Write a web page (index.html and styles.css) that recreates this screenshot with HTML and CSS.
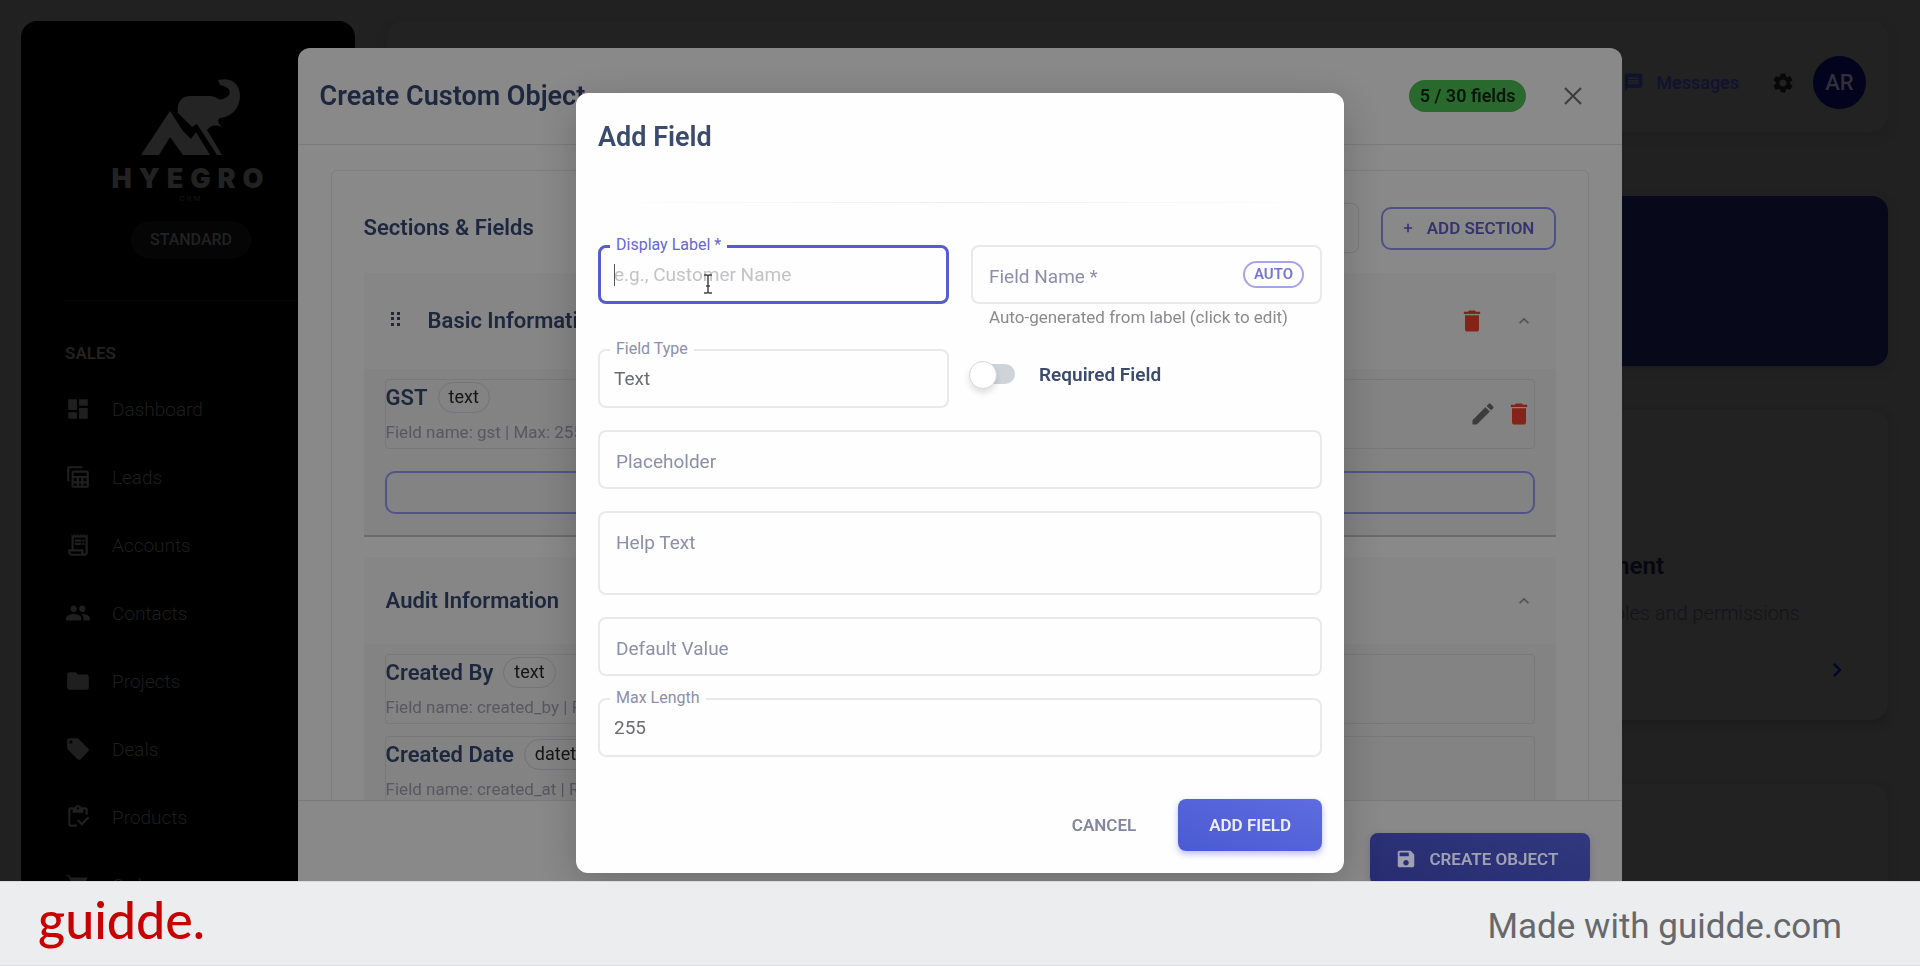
FILE: index.html
```html
<!DOCTYPE html>
<html lang="en">
<head>
<meta charset="utf-8">
<title>Create Custom Object</title>
<link rel="stylesheet" href="styles.css">
</head>
<body>
<svg class="sprite" aria-hidden="true">
  <symbol id="trash" viewBox="0 0 24 24"><path d="M6 19c0 1.100.9 2 2 2h8c1.100 0 2-.9 2-2V7H6v12zM19 4h-3.500l-1-1h-5l-1 1H5v2h14V4z"/></symbol>
  <symbol id="up" viewBox="0 0 24 24"><path d="M12 8l-6 6 1.410 1.410L12 10.830l4.590 4.580L18 14z"/></symbol>
</svg>

<div class="app">
  <aside class="sidebar">
    <div class="brand">
      <svg class="brand-mark" viewBox="0 0 102 78" aria-hidden="true">
        <path d="M1 77L30 33L43 53L51 61L56 54L70 77H43L30 59L19 77Z"/>
        <path d="M38 35C36 23 43 18 50 18H70C76 18 79 23 83 21C94 17 91 9 80 7L78 2C93-1 100 7 100 19C99 31 91 39 80 40C76 43 79 46 82 49C75 46 70 48 67 52L82 77H77L57 46L52 49Z"/>
      </svg>
      <div class="brand-name">HYEGRO</div>
      <div class="brand-sub">CRM</div>
      <div class="plan">STANDARD</div>
    </div>
    <hr class="side-line">
    <h2 class="side-title">SALES</h2>
    <nav class="nav">
      <a href="#"><svg viewBox="0 0 24 24"><path d="M3 13h8V3H3v10zm0 8h8v-6H3v6zm10 0h8V11h-8v10zm0-18v6h8V3h-8z"/></svg>Dashboard</a>
      <a href="#"><svg viewBox="0 0 24 24"><path fill-rule="evenodd" d="M4 16V4h12V2H4a2 2 0 0 0-2 2v12zM20 6H8a2 2 0 0 0-2 2v12a2 2 0 0 0 2 2h12a2 2 0 0 0 2-2V8a2 2 0 0 0-2-2zM8 8h12v3H8zm0 5h3v3H8zm5 0h2v3h-2zm4 0h3v3h-3zm-9 5h3v2H8zm5 0h2v2h-2zm4 0h3v2h-3z"/></svg>Leads</a>
      <a href="#"><svg viewBox="0 0 24 24"><path d="M19.500 3.500L18 2l-1.500 1.500L15 2l-1.500 1.500L12 2l-1.500 1.500L9 2 7.500 3.500 6 2v14H3v3c0 1.660 1.340 3 3 3h12c1.660 0 3-1.340 3-3V2l-1.500 1.500zM15 20H6c-.55 0-1-.45-1-1v-1h10v2zm4-1c0 .55-.45 1-1 1s-1-.45-1-1v-3H8V5h11v14z"/><path d="M9 7h6v2H9zM16 7h2v2h-2zM9 10h6v2H9zM16 10h2v2h-2z"/></svg>Accounts</a>
      <a href="#"><svg viewBox="0 0 24 24"><path d="M16 11c1.660 0 2.990-1.340 2.990-3S17.660 5 16 5s-3 1.340-3 3 1.340 3 3 3zm-8 0c1.660 0 2.990-1.340 2.990-3S9.660 5 8 5 5 6.340 5 8s1.340 3 3 3zm0 2c-2.330 0-7 1.170-7 3.500V19h14v-2.500C15 14.170 10.330 13 8 13zm8 0c-.29 0-.62.02-.97.05 1.160.84 1.970 1.970 1.970 3.450V19h6v-2.500c0-2.330-4.670-3.500-7-3.500z"/></svg>Contacts</a>
      <a href="#"><svg viewBox="0 0 24 24"><path d="M10 4H4c-1.100 0-1.990.9-1.990 2L2 18c0 1.100.9 2 2 2h16c1.100 0 2-.9 2-2V8c0-1.100-.9-2-2-2h-8l-2-2z"/></svg>Projects</a>
      <a href="#"><svg viewBox="0 0 24 24"><path d="M21.410 11.580l-9-9C12.050 2.220 11.550 2 11 2H4c-1.100 0-2 .9-2 2v7c0 .55.22 1.050.59 1.420l9 9c.36.36.86.58 1.410.58s1.050-.22 1.410-.59l7-7c.37-.36.59-.86.59-1.410s-.23-1.060-.59-1.420zM5.500 7C4.670 7 4 6.330 4 5.500S4.670 4 5.500 4 7 4.670 7 5.500 6.330 7 5.500 7z"/></svg>Deals</a>
      <a href="#"><svg viewBox="0 0 24 24"><path d="M5 5h2v3h10V5h2v5h2V5c0-1.100-.9-2-2-2h-4.180C14.400 1.840 13.300 1 12 1s-2.400.84-2.820 2H5c-1.100 0-2 .9-2 2v14c0 1.100.9 2 2 2h6v-2H5V5zm7-2c.55 0 1 .45 1 1s-.45 1-1 1-1-.45-1-1 .45-1 1-1z"/><path d="M21 11.500L15.510 17l-3.010-3-1.500 1.500 4.510 4.500L22.500 13z"/></svg>Products</a>
      <a href="#"><svg viewBox="0 0 24 24"><path d="M7 18c-1.100 0-1.990.9-1.990 2S5.900 22 7 22s2-.9 2-2-.9-2-2-2zM1 2v2h2l3.600 7.590-1.350 2.450C4.520 15.370 5.480 17 7 17h12v-2H7l1.100-2h7.450c.75 0 1.410-.41 1.750-1.030L21 5H5.210l-.94-2H1zm16 16c-1.100 0-1.990.9-1.990 2s.89 2 1.990 2 2-.9 2-2-.9-2-2-2z"/></svg>Orders</a>
    </nav>
  </aside>

  <main class="main">
    <header class="topbar">
      <a class="messages" href="#"><svg viewBox="0 0 24 24"><path d="M20 2H4c-1.100 0-1.990.9-1.990 2L2 22l4-4h14c1.100 0 2-.9 2-2V4c0-1.100-.9-2-2-2zm-2 12H6v-2h12v2zm0-3H6V9h12v2zm0-3H6V6h12v2z"/></svg>Messages</a>
      <button class="gear" aria-label="Settings"><svg viewBox="0 0 24 24"><path d="M19.140 12.940c.04-.3.060-.61.060-.94 0-.32-.02-.64-.07-.94l2.030-1.580c.18-.14.23-.41.12-.61l-1.920-3.320c-.12-.22-.37-.29-.59-.22l-2.390.96c-.5-.38-1.030-.7-1.620-.94l-.36-2.540c-.04-.24-.24-.41-.48-.41h-3.840c-.24 0-.43.17-.47.41l-.36 2.540c-.59.24-1.130.57-1.620.94l-2.390-.96c-.22-.08-.47 0-.59.22L2.740 8.870c-.12.21-.08.47.12.61l2.030 1.580c-.05.3-.09.63-.09.94s.02.64.07.94l-2.030 1.580c-.18.14-.23.41-.12.61l1.920 3.320c.12.22.37.29.59.22l2.390-.96c.5.38 1.030.7 1.620.94l.36 2.540c.05.24.24.41.48.41h3.840c.24 0 .44-.17.47-.41l.36-2.540c.59-.24 1.130-.56 1.620-.94l2.390.96c.22.08.47 0 .59-.22l1.920-3.320c.12-.22.07-.47-.12-.61l-2.010-1.580zM12 15.600c-1.980 0-3.600-1.620-3.600-3.600s1.620-3.600 3.600-3.600 3.600 1.620 3.600 3.600-1.620 3.600-3.600 3.600z"/></svg></button>
      <div class="avatar">AR</div>
    </header>
    <section class="hero"></section>
    <section class="card">
      <h3>User Management</h3>
      <p>Manage users, roles and permissions</p>
      <svg class="card-go" viewBox="0 0 24 24"><path d="M10 6L8.590 7.410 13.170 12l-4.580 4.590L10 18l6-6z"/></svg>
    </section>
    <section class="card"></section>
  </main>
</div>

<div class="layer">
  <section class="object-dialog">
    <header class="object-head">
      <h1>Create Custom Object</h1>
      <span class="count">5 / 30 fields</span>
      <button class="close" aria-label="Close"><svg viewBox="0 0 18 18"><path d="M1 1L17 17M17 1L1 17"/></svg></button>
    </header>
    <div class="object-body">
      <div class="panel">
        <div class="toolbar">
          <h2>Sections &amp; Fields</h2>
          <input class="search" type="text" aria-label="Section name">
          <button class="add-section"><svg viewBox="0 0 12 12"><path d="M6 1V11M1 6H11"/></svg>ADD SECTION</button>
        </div>
        <section class="group group-main">
          <header class="group-head">
            <svg class="grip" viewBox="0 0 10 14"><path d="M0 0h3v3H0zM6 0h3v3H6zM0 5h3v3H0zM6 5h3v3H6zM0 11h3v3H0zM6 11h3v3H6z"/></svg>
            <h3>Basic Information</h3>
            <button class="tool danger" aria-label="Delete section"><svg><use href="#trash"/></svg></button>
            <button class="tool fold" aria-label="Collapse"><svg><use href="#up"/></svg></button>
          </header>
          <div class="group-body">
            <article class="item">
              <div class="item-text">
                <h4>GST <span class="chip">text</span></h4>
                <p>Field name: gst | Max: 255</p>
              </div>
              <button class="tool edit" aria-label="Edit"><svg viewBox="0 0 24 24"><path d="M3 17.250V21h3.750L17.810 9.940l-3.750-3.750L3 17.250zM20.710 7.040c.39-.39.39-1.020 0-1.410l-2.340-2.340c-.39-.39-1.020-.39-1.410 0l-1.830 1.830 3.750 3.750 1.830-1.830z"/></svg></button>
              <button class="tool danger" aria-label="Delete field"><svg><use href="#trash"/></svg></button>
            </article>
            <button class="add-row" aria-label="Add field"></button>
          </div>
        </section>
        <section class="group">
          <header class="group-head short">
            <h3>Audit Information</h3>
            <button class="tool fold" aria-label="Collapse"><svg><use href="#up"/></svg></button>
          </header>
          <div class="group-body">
            <article class="item">
              <div class="item-text">
                <h4>Created By <span class="chip">text</span></h4>
                <p>Field name: created_by | Read-only</p>
              </div>
            </article>
            <article class="item">
              <div class="item-text">
                <h4>Created Date <span class="chip">datetime</span></h4>
                <p>Field name: created_at | Read-only</p>
              </div>
            </article>
          </div>
        </section>
      </div>
    </div>
    <footer class="object-foot">
      <button class="create"><svg viewBox="0 0 24 24"><path d="M17 3H5c-1.110 0-2 .9-2 2v14c0 1.100.89 2 2 2h14c1.100 0 2-.9 2-2V7l-4-4zm-5 16c-1.660 0-3-1.340-3-3s1.340-3 3-3 3 1.340 3 3-1.340 3-3 3zm3-10H5V5h10v4z"/></svg>CREATE OBJECT</button>
    </footer>
  </section>
</div>

<div class="layer">
  <form class="field-dialog">
    <h1>Add Field</h1>
    <hr class="fade-line">
    <div class="fields">
      <div class="pair">
        <div class="field raised focus">
          <label for="f-label">Display Label *</label>
          <input id="f-label" type="text" placeholder="e.g., Customer Name">
          <i class="caret"></i>
          <svg class="ibeam" viewBox="0 0 10 20"><path d="M1 1H4L5 2L6 1H9M5 2V18M1 19H4L5 18L6 19H9M3 12H7"/></svg>
        </div>
        <div>
          <div class="field">
            <label for="f-name">Field Name *</label>
            <input id="f-name" type="text">
            <span class="auto">AUTO</span>
          </div>
          <p class="hint">Auto-generated from label (click to edit)</p>
        </div>
      </div>
      <div class="pair">
        <div class="field raised">
          <label for="f-type">Field Type</label>
          <select id="f-type"><option>Text</option></select>
        </div>
        <label class="switch"><input type="checkbox">Required Field</label>
      </div>
      <div class="field">
        <label for="f-ph">Placeholder</label>
        <input id="f-ph" type="text">
      </div>
      <div class="field">
        <label for="f-help">Help Text</label>
        <textarea id="f-help"></textarea>
      </div>
      <div class="field">
        <label for="f-def">Default Value</label>
        <input id="f-def" type="text">
      </div>
      <div class="field raised">
        <label for="f-max">Max Length</label>
        <input id="f-max" type="text" value="255">
      </div>
    </div>
    <div class="actions">
      <button type="button" class="cancel">CANCEL</button>
      <button type="button" class="submit">ADD FIELD</button>
    </div>
  </form>
</div>

<footer class="credit">
  <span class="guidde">guidde.</span>
  <span class="made">Made with guidde.com</span>
</footer>
</body>
</html>
```
FILE: styles.css
```css
* { box-sizing: border-box; }
body { margin: 0; height: 100vh; overflow: hidden; background: #212121; font-family: Roboto, "Liberation Sans", sans-serif; color: #1d273d; }
h1, h2, h3, h4, p, hr { margin: 0; font-weight: 600; }
button { font: inherit; background: none; border: 0; padding: 0; }
a { color: inherit; text-decoration: none; }
svg { display: block; fill: currentColor; flex: none; }
.sprite { position: absolute; width: 0; height: 0; }

.app { display: flex; height: 100vh; padding: 21px 32px 0 21px; gap: 32px; overflow: hidden; }
.sidebar { flex: 0 0 334px; background: #000; border-radius: 16px 16px 0 0; padding: 57px 44px 0; color: #222; }
.brand { display: flex; flex-direction: column; align-items: center; padding-left: 6px; }
.brand-mark { width: 102px; height: 78px; color: #242424; }
.brand-name { margin-top: 8px; font: 900 27px/30px Inter, sans-serif; letter-spacing: 7px; }
.brand-sub { font-size: 8px; line-height: 10px; letter-spacing: 2px; color: #151515; }
.plan { margin-top: 18px; height: 36px; padding: 0 18px; border-radius: 18px; background: #050505; border: 1px solid #080808; font-size: 16px; line-height: 34px; font-weight: 500; }
.side-line { margin-top: 42px; border: 0; height: 1px; background: #070707; }
.side-title { margin-top: 42px; font-size: 17px; line-height: 20px; }
.nav { margin-top: 12px; display: flex; flex-direction: column; }
.nav a { display: flex; align-items: center; gap: 21px; height: 68px; font-size: 19px; font-weight: 300; color: #1e1e1e; }
.nav svg { width: 26px; height: 26px; color: #1f1f1f; }

.main { flex: 1; display: flex; flex-direction: column; }
.main > * { flex: none; }
.topbar { height: 111px; border-radius: 16px; background: #222; box-shadow: 0 4px 8px #1f1f1f; display: flex; align-items: center; justify-content: flex-end; padding: 12px 22px 0 0; gap: 18px; }
.messages { display: flex; align-items: center; gap: 12px; font-size: 18px; font-weight: 500; color: #121130; margin-right: 14px; }
.messages svg { width: 21px; height: 21px; }
.gear svg { width: 24px; height: 24px; }
.gear { color: #080808; }
.avatar { width: 53px; height: 53px; border-radius: 50%; background: #03031d; color: #30303c; font-size: 22px; font-weight: 500; line-height: 53px; text-align: center; }
.hero { margin-top: 64px; height: 170px; border-radius: 16px; background: #08081b; box-shadow: 0 4px 8px #1d1d20; }
.card { margin-top: 44px; min-height: 310px; border-radius: 16px; background: #222; box-shadow: 0 4px 8px #1c1c1c; padding: 142px 88px 0; text-align: right; color: #070710; }
.card + .card { margin-top: 64px; }
.card h3 { font-size: 24px; line-height: 28px; padding-right: 136px; }
.card p { margin-top: 20px; font-size: 20px; line-height: 26px; font-weight: 300; color: #141418; }
.card-go { width: 28px; height: 28px; margin: 30px -51px 0 auto; color: #06062b; }

.layer { position: fixed; inset: 0; display: flex; align-items: center; justify-content: center; }
.object-dialog { width: 69%; height: calc(100% - 96px); display: flex; flex-direction: column; border-radius: 12px; background: #898989; overflow: hidden; }
.object-head { display: flex; align-items: center; height: 97px; padding: 0 40px 0 22px; border-bottom: 1px solid #7b7b7b; }
.object-head h1 { flex: 1; font-size: 27px; line-height: 32px; }
.count { height: 32px; border-radius: 16px; padding: 0 11px; background: #29692d; color: #051506; font-size: 18px; line-height: 32px; font-weight: 600; }
.close { margin-left: 38px; color: #3c3c3c; }
.close svg { width: 18px; height: 18px; fill: none; stroke: currentColor; stroke-width: 2; }
.object-body { flex: 1; min-height: 0; overflow: hidden; padding: 25px 33px 0; }
.panel { border: 1px solid #7e7e7e; border-radius: 6px; padding: 32px 32px 0; }
.toolbar { display: flex; align-items: center; height: 50px; margin-bottom: 20px; }
.toolbar h2 { flex: 1; font-size: 22px; line-height: 28px; }
.search { width: 220px; height: 50px; border: 1px solid #7c7c7c; border-radius: 8px; background: none; margin-right: 22px; }
.add-section { display: flex; align-items: center; gap: 14px; height: 43px; padding: 0 20px; border: 2px solid #524f88; border-radius: 10px; color: #35346f; font-size: 17px; font-weight: 600; }
.add-section svg { width: 10px; height: 10px; stroke: currentColor; stroke-width: 2; }
.group { background: #838383; margin-bottom: 20px; }
.group-main { border-bottom: 2px solid #6b6b6b; }
.group-head { display: flex; align-items: center; height: 96px; padding: 0 22px; background: #868686; }
.group-head.short { height: 87px; }
.group-head h3 { flex: 1; font-size: 22px; line-height: 28px; }
.grip { width: 10px; height: 14px; margin: 0 27px 4px 5px; }
.tool svg { width: 28px; height: 28px; }
.danger { color: #842318; }
.fold { margin-left: 28px; color: #505050; }
.fold svg { width: 20px; height: 20px; }
.group-body { padding: 10px 21px 21px; display: flex; flex-direction: column; gap: 12px; }
.item { display: flex; align-items: center; height: 70px; border: 1px solid #797979; border-radius: 4px; padding-right: 1px; }
.item-text { flex: 1; padding-bottom: 2px; }
.item h4 { display: flex; align-items: center; gap: 10px; font-size: 22px; line-height: 30px; }
.chip { height: 31px; padding: 0 10px; border: 1px solid #737379; border-radius: 16px; font-size: 18px; line-height: 28px; font-weight: 400; color: #141414; }
.item p { margin-top: 7px; font-size: 17px; line-height: 24px; font-weight: 400; color: #58585f; }
.edit { color: #3d3d3d; margin-right: 8px; }
.add-row { height: 43px; margin-top: 10px; border: 2px solid #55528a; border-radius: 10px; }
.object-foot { display: flex; justify-content: flex-end; padding: 32px 32px 33px; border-top: 1px solid #797979; }
.create { display: flex; align-items: center; gap: 12px; height: 52px; padding: 0 32px 0 25px; border-radius: 8px; background: linear-gradient(20deg, #272c70, #31387e); color: #a0a2b4; font-size: 17px; font-weight: 600; box-shadow: 0 2px 6px #6c6c84; }
.create svg { width: 22px; height: 22px; }

.field-dialog { width: 40%; border-radius: 12px; background: #fefefe; padding: 22px; box-shadow: 0 10px 40px rgba(0,0,0,.2); }
.field-dialog h1 { font-size: 27px; line-height: 44px; color: #3a4b6d; }
.fade-line { border: 0; height: 1px; margin: 43px 0 42px; background: linear-gradient(90deg, #fefefe, #ededed 50%, #fefefe); }
.fields { display: grid; gap: 22px; }
.pair { display: grid; grid-template-columns: 1fr 1fr; gap: 22px; align-items: start; }
.field { position: relative; display: flex; }
.field input, .field select, .field textarea { width: 100%; height: 59px; padding: 0 14px; border: 2px solid #e9e9ec; border-radius: 8px; background: none; font: 400 19px/24px Roboto, sans-serif; color: #6b6c72; outline: 0; appearance: none; resize: none; }
.field textarea { height: 84px; }
.field label { position: absolute; left: 18px; top: 20px; font-size: 19px; line-height: 24px; color: #8d8ea9; pointer-events: none; }
.field.raised label { left: 12px; top: -10px; padding: 0 6px; font-size: 16px; line-height: 20px; background: #fefefe; }
.field.focus label { color: #6667d4; }
.field.focus input { border-color: #555cd0; border-width: 3px; padding: 0 13px; }
.field input::placeholder { color: #c3c3c6; opacity: 1; }
.caret { position: absolute; left: 16px; top: 19px; width: 1px; height: 22px; background: #555; }
.ibeam { position: absolute; left: 105px; top: 29px; width: 10px; height: 20px; fill: none; stroke: #444; stroke-width: 1.5; }
.auto { position: absolute; right: 18px; top: 16px; height: 27px; padding: 0 9px; border: 2px solid #a3a5e8; border-radius: 14px; color: #7577cf; font-size: 15px; line-height: 22px; font-weight: 600; }
.hint { margin: 3px 18px 0; font-size: 17px; line-height: 20px; font-weight: 400; color: #8a8a8e; }
.switch { display: flex; align-items: center; gap: 24px; height: 50px; font-size: 19px; font-weight: 600; color: #3a4b6d; }
.switch input { position: relative; appearance: none; width: 42px; height: 20px; margin: 0 0 0 2px; border-radius: 10px; background: #ced4da; }
.switch input::before { content: ""; position: absolute; left: -4px; top: -3px; width: 26px; height: 26px; border-radius: 50%; background: #fff; border: 1px solid #d6d9dd; box-shadow: 0 4px 6px rgba(0,0,0,.12); }
.actions { display: flex; justify-content: flex-end; align-items: center; gap: 42px; margin-top: 42px; font-size: 17px; font-weight: 600; }
.cancel { color: #83869f; }
.submit { height: 52px; padding: 0 31px; border-radius: 8px; background: linear-gradient(20deg, #4a5ad2, #5e6ce0); color: #eceefc; box-shadow: 0 3px 6px rgba(80,90,220,.4); }

.credit { position: fixed; left: 0; right: 0; bottom: 0; height: 85px; display: flex; align-items: center; justify-content: space-between; padding: 0 78px 0 38px; background: #ecedef; border-top: 1px solid #dcdcde; border-bottom: 1px solid #dcdde1; }
.guidde { font: 500 52px/60px Lato, sans-serif; color: #c80000; padding-bottom: 10px; }
.made { font-size: 35px; line-height: 44px; color: #66686b; padding-top: 6px; }
```
